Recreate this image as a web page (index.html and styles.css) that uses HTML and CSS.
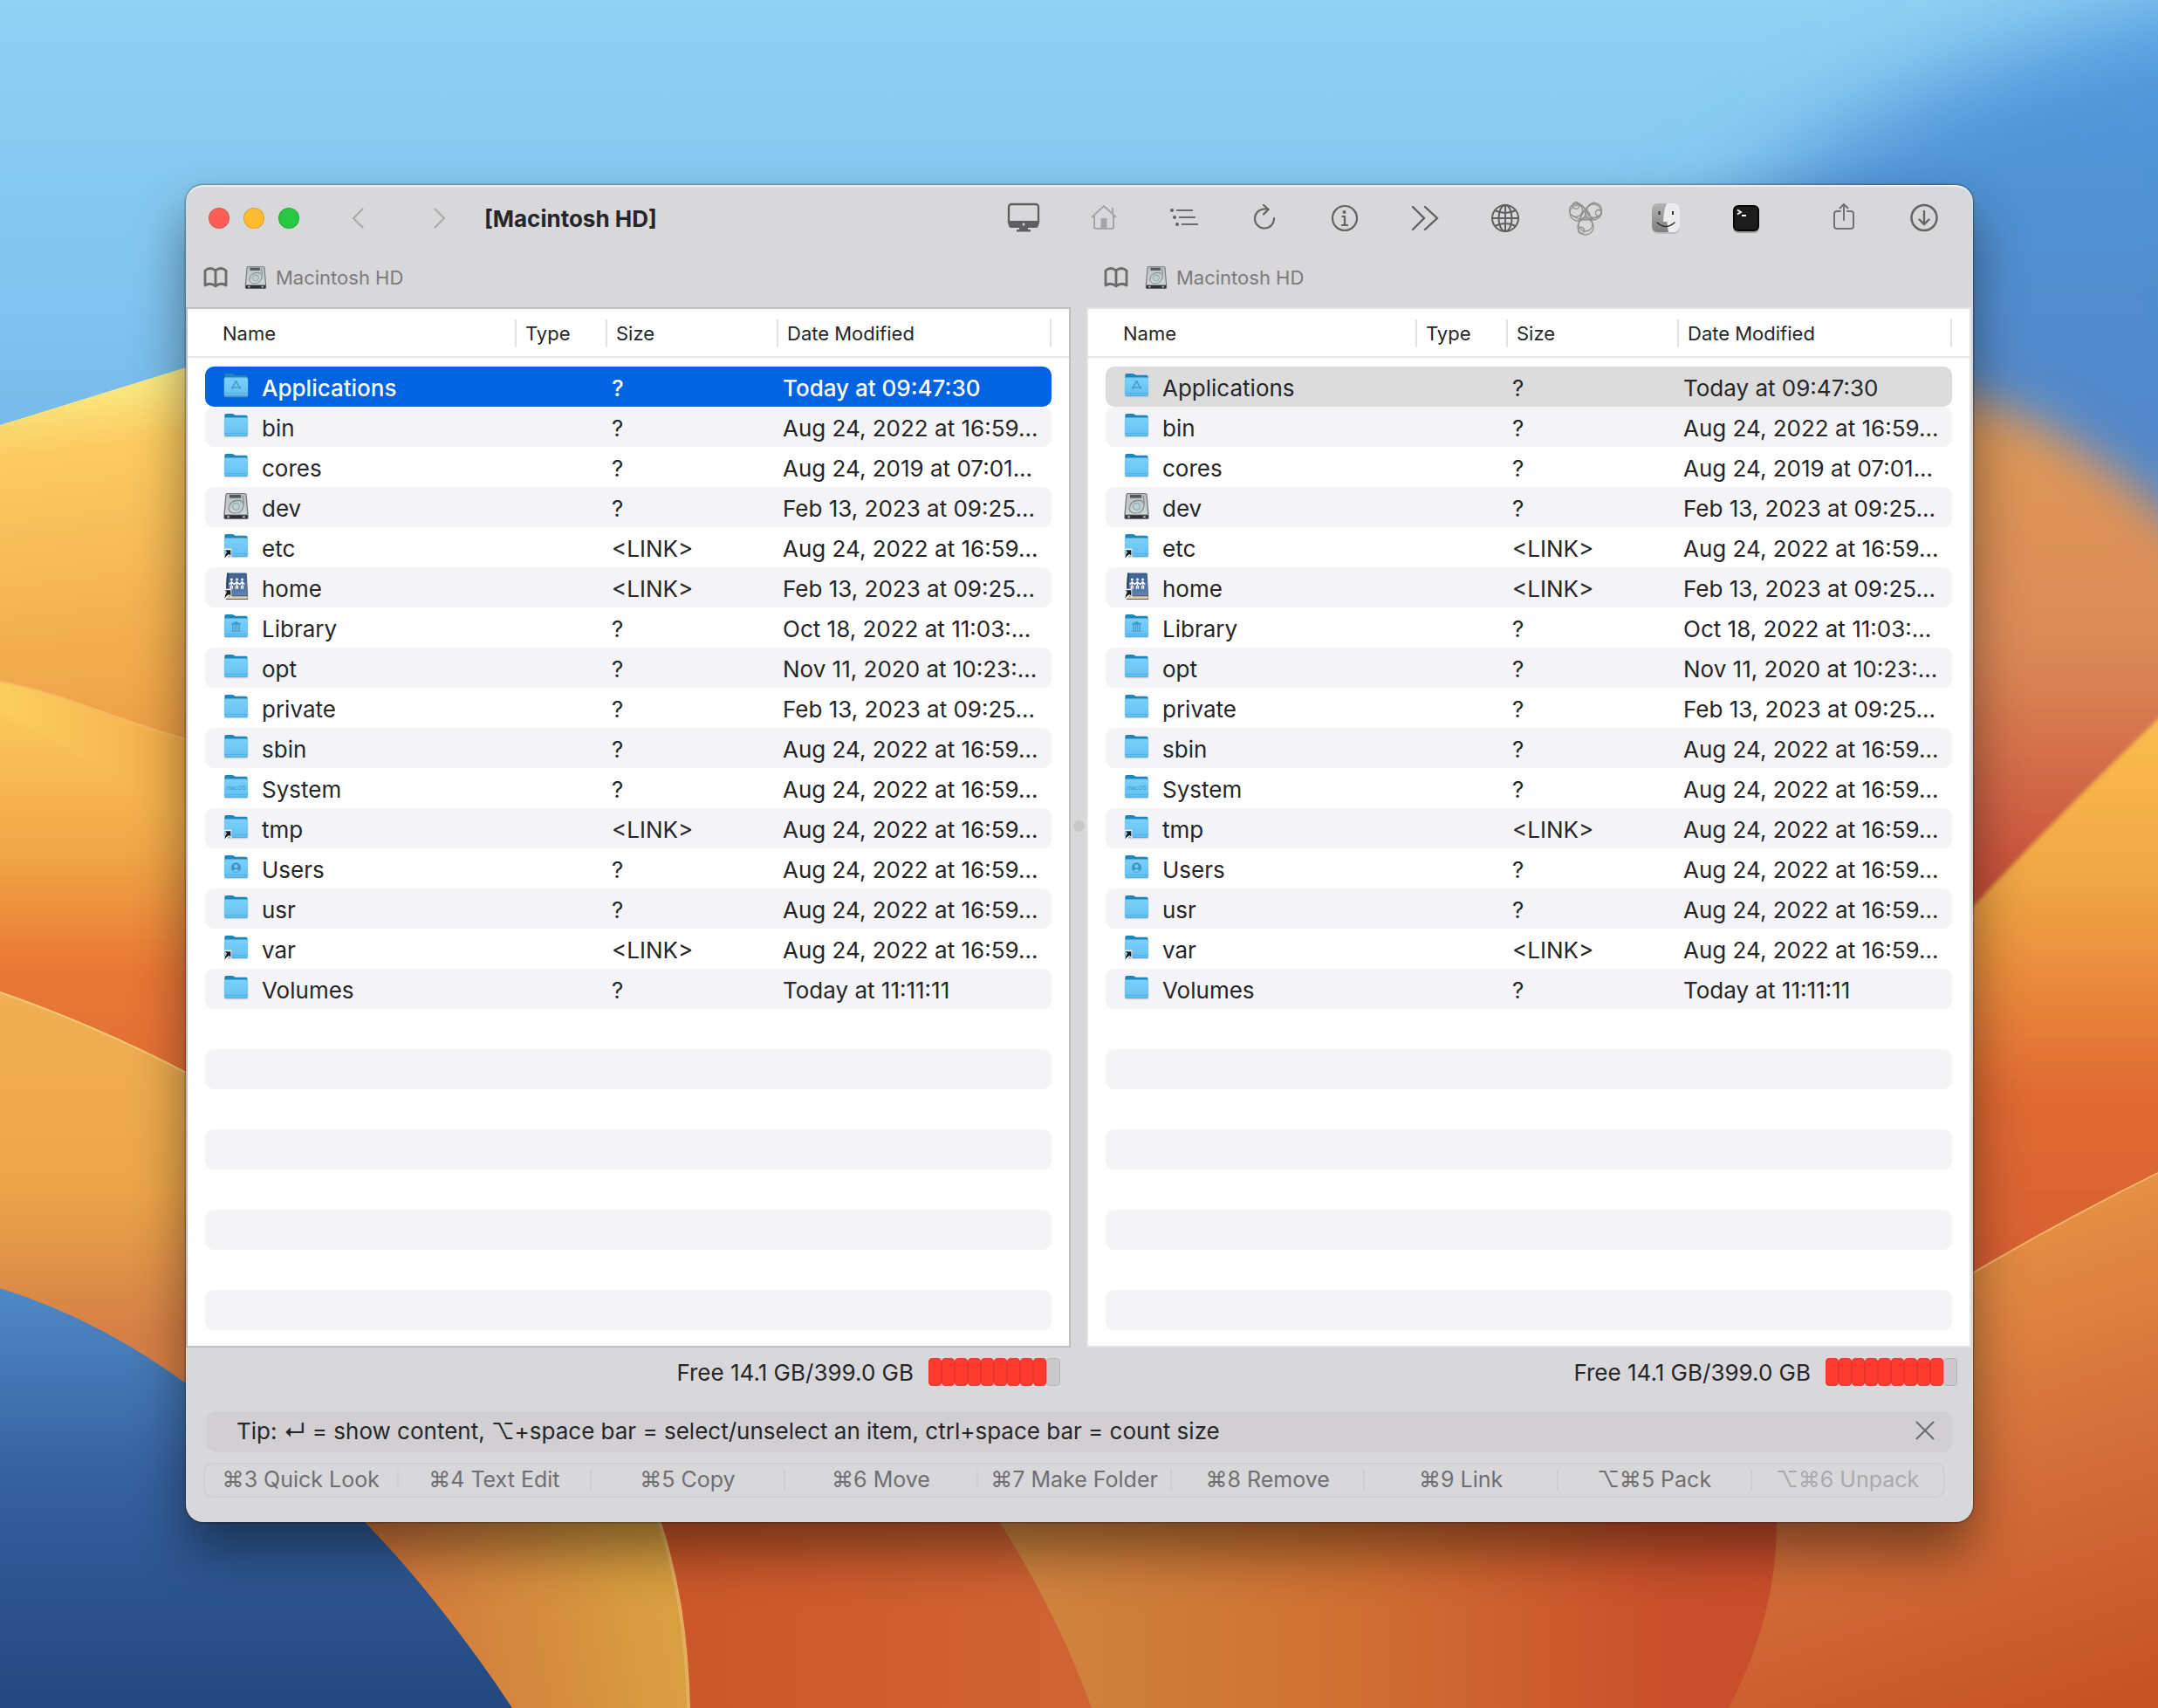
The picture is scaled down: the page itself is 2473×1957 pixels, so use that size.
FILE: index.html
```html
<!DOCTYPE html>
<html lang="en">

<head>
    <meta charset="UTF-8">
    <meta name="viewport" content="width=device-width, initial-scale=1.0">
    <title>Macintosh HD</title>
    <link rel="stylesheet" href="styles.css">
</head>

<body>

    <!-- wallpaper -->
    <svg class="wallpaper" viewBox="0 0 2473 1957" preserveAspectRatio="none" aria-hidden="true">
        <defs>
            <linearGradient id="sky" x1="0" y1="0" x2="0" y2="1">
                <stop offset="0" stop-color="#8fd0f3" />
                <stop offset=".5" stop-color="#82c6f0" />
                <stop offset="1" stop-color="#70b4e8" />
            </linearGradient>
            <linearGradient id="skyRight" x1="0" y1="0" x2="0" y2="1">
                <stop offset="0" stop-color="#4f9ce0" />
                <stop offset=".5" stop-color="#5289c9" />
                <stop offset="1" stop-color="#5289c9" />
            </linearGradient>
            <linearGradient id="petal1" gradientUnits="userSpaceOnUse" x1="80" y1="430" x2="130" y2="850">
                <stop offset="0" stop-color="#fbf08a" />
                <stop offset=".2" stop-color="#fccb60" />
                <stop offset="1" stop-color="#ec9f45" />
            </linearGradient>
            <linearGradient id="petal2" x1="0" y1="0" x2="0" y2="1">
                <stop offset="0" stop-color="#fbcb5c" />
                <stop offset=".3" stop-color="#f0a445" />
                <stop offset=".52" stop-color="#e87735" />
                <stop offset="1" stop-color="#dd6634" />
            </linearGradient>
            <linearGradient id="petal3" x1="0" y1="0" x2="0" y2="1">
                <stop offset="0" stop-color="#efb052" />
                <stop offset=".4" stop-color="#eba549" />
                <stop offset=".7" stop-color="#d67f46" />
                <stop offset="1" stop-color="#d17c48" />
            </linearGradient>
            <linearGradient id="fold" x1="0" y1="0" x2="1" y2="0">
                <stop offset="0" stop-color="#fccf5e" />
                <stop offset="1" stop-color="#ee9f42" />
            </linearGradient>
            <linearGradient id="deepBlue" x1="0" y1="0" x2="0" y2="1">
                <stop offset="0" stop-color="#4f89c4" />
                <stop offset=".45" stop-color="#35619f" />
                <stop offset="1" stop-color="#234880" />
            </linearGradient>
            <linearGradient id="rightBlur" x1="0" y1="0" x2="0" y2="1">
                <stop offset="0" stop-color="#dc9b58" />
                <stop offset=".4" stop-color="#dd8a58" />
                <stop offset=".75" stop-color="#c8503a" />
                <stop offset="1" stop-color="#c8503a" />
            </linearGradient>
            <linearGradient id="rightPetal" x1="0" y1="0" x2="0" y2="1">
                <stop offset="0" stop-color="#fbc050" />
                <stop offset=".3" stop-color="#f0a544" />
                <stop offset=".65" stop-color="#e06a33" />
                <stop offset="1" stop-color="#d65e30" />
            </linearGradient>
            <linearGradient id="rightLow" gradientUnits="userSpaceOnUse" x1="2230" y1="1380" x2="2420" y2="1957">
                <stop offset="0" stop-color="#e89546" />
                <stop offset=".5" stop-color="#d4703a" />
                <stop offset="1" stop-color="#c35226" />
            </linearGradient>
            <linearGradient id="low1" gradientUnits="userSpaceOnUse" x1="460" y1="1870" x2="780" y2="1810">
                <stop offset="0" stop-color="#d2773c" />
                <stop offset=".8" stop-color="#d79b40" />
                <stop offset="1" stop-color="#d9a040" />
            </linearGradient>
            <linearGradient id="low2" x1="0" y1="0" x2="1" y2="0">
                <stop offset="0" stop-color="#cb5629" />
                <stop offset="1" stop-color="#cf6434" />
            </linearGradient>
            <linearGradient id="low3" x1="0" y1="0" x2="1" y2="0">
                <stop offset="0" stop-color="#d08840" />
                <stop offset=".45" stop-color="#cf6f32" />
                <stop offset=".8" stop-color="#c9502b" />
                <stop offset="1" stop-color="#c94d2c" />
            </linearGradient>
            <filter id="soft" x="-20%" y="-20%" width="140%" height="140%">
                <feGaussianBlur stdDeviation="26" />
            </filter>
            <filter id="softer" x="-30%" y="-50%" width="160%" height="200%">
                <feGaussianBlur stdDeviation="55" />
            </filter>
            <filter id="edge" x="-5%" y="-5%" width="110%" height="110%">
                <feGaussianBlur stdDeviation="2" />
            </filter>
        </defs>
        <rect width="2473" height="600" fill="url(#sky)" />
        <path d="M1850 420C2000 200 2150 80 2600 -20V900H1800Z" fill="url(#skyRight)" filter="url(#softer)" />
        <path d="M2060 440C2250 420 2390 480 2560 670V1200H2060Z" fill="url(#rightBlur)" filter="url(#soft)" />
        <path d="M0 487L213 421L500 330V1000H0Z" fill="url(#petal1)" />
        <path d="M0 781C90 797 150 838 300 868V1300H0Z" fill="url(#fold)" />
        <path d="M0 781C90 797 150 838 300 868" fill="none" stroke="#f8b865" stroke-width="2" />
        <path d="M-20 806L0 815L213 933L300 980V1400H-20Z" fill="url(#petal2)" filter="url(#edge)" />
        <path d="M0 1137Q110 1175 213 1229L300 1275V1700H0Z" fill="url(#petal3)" />
        <path d="M0 1137Q110 1175 213 1229" fill="none" stroke="#f6c873" stroke-width="2" />
        <path d="M2200 1105Q2340 950 2493 805V1500H2200Z" fill="url(#rightPetal)" filter="url(#edge)" />
        <path d="M380 1700H780C790 1800 792 1870 790 1957H560Z" fill="url(#low1)" />
        <path d="M740 1700C778 1790 788 1870 790 1957H1260L1160 1700Z" fill="url(#low2)" />
        <path d="M744 1710C778 1800 787 1880 789 1957" fill="none" stroke="#e5ae5f" stroke-width="4" />
        <path d="M1118 1700C1170 1780 1216 1860 1251 1957H2100V1700Z" fill="url(#low3)" />
        <path d="M2034 1700L2200 1495Q2330 1415 2473 1344V1957H1981C2026 1870 2042 1790 2034 1700Z" fill="url(#rightLow)" />
        <path d="M2200 1495Q2330 1415 2473 1344" fill="none" stroke="#f3b16a" stroke-width="2" />
        <path d="M0 1476Q110 1510 213 1585C330 1640 470 1780 587 1957H0Z" fill="url(#deepBlue)" />
    </svg>

    <!-- icon sprite -->
    <svg class="sprite" aria-hidden="true">
        <defs>
            <linearGradient id="folderFront" x1="0" y1="0" x2="0" y2="1">
                <stop offset="0" stop-color="#7bd0f9" />
                <stop offset="1" stop-color="#63c0f3" />
            </linearGradient>
            <linearGradient id="diskBody" x1="0" y1="0" x2="0" y2="1">
                <stop offset="0" stop-color="#b9bfc0" />
                <stop offset="1" stop-color="#cfd6d7" />
            </linearGradient>
            <linearGradient id="bookCover" x1="0" y1="0" x2="0" y2="1">
                <stop offset="0" stop-color="#3d5f8d" />
                <stop offset="1" stop-color="#5c83b3" />
            </linearGradient>
            <linearGradient id="finderLeft" x1="0" y1="0" x2="0" y2="1">
                <stop offset="0" stop-color="#b5b5b6" />
                <stop offset="1" stop-color="#7e7e80" />
            </linearGradient>
        </defs>
        <symbol id="folder" viewBox="0 0 32 34">
            <path d="M2 4q0-2 2-2h7q1.500 0 2.500 1l1.500 1h13q2 0 2 2v8H2z" fill="#1d86bf" />
            <rect x="1.500" y="8" width="29" height="23" rx="2" fill="#a9b6bd" opacity=".5" />
            <rect x="1.500" y="7" width="29" height="22.500" rx="2" fill="url(#folderFront)" />
            <path d="M2 26h28" stroke="#52aede" stroke-width="1" />
            <path d="M3 29h26" stroke="#4aa3d2" stroke-width="1" />
        </symbol>
        <symbol id="apps" viewBox="0 0 32 34">
            <use href="#folder" />
            <path d="M16 11l-5 10M16 11l5 10M10 19h12" fill="none" stroke="#3f98c9" stroke-width="1.500" />
        </symbol>
        <symbol id="library" viewBox="0 0 32 34">
            <use href="#folder" />
            <path d="M10.500 14L16 11l5.500 3zM10 22.500h12" fill="#3f98c9" stroke="#3f98c9" />
            <path d="M12 15v7M14.700 15v7M17.300 15v7M20 15v7" stroke="#3f98c9" stroke-width="1.300" />
        </symbol>
        <symbol id="system" viewBox="0 0 32 34">
            <use href="#folder" />
            <text x="16" y="20" class="folder-label">macOS</text>
        </symbol>
        <symbol id="users" viewBox="0 0 32 34">
            <use href="#folder" />
            <circle cx="16" cy="17" r="6" fill="#3c96c8" />
            <circle cx="16" cy="15.500" r="2.300" fill="#74cbf6" />
            <path d="M12 21q4-4 8 0q-4 3-8 0z" fill="#74cbf6" />
        </symbol>
        <symbol id="disk" viewBox="0 0 32 34">
            <path d="M5 1h22q1.500 0 2 2l2 24v4q0 2-2 2H3q-2 0-2-2v-4L3 3q.5-2 2-2z" fill="#77797a" />
            <path d="M5.500 2h21q1 0 1.200 1.500L29.500 27h-27L4.300 3.500Q4.500 2 5.500 2z" fill="url(#diskBody)" />
            <rect x="8" y="3" width="14" height="4" fill="#55595b" />
            <path d="M24 4q4 18-6 21q-10 2-11-5q1-10 12-10q4 0 5 3" fill="none" stroke="#7d888a" stroke-width="1.200" />
            <circle cx="16" cy="17.500" r="4.200" fill="#bcd3da" stroke="#8b9a9e" />
            <path d="M2 28h28v3q0 1-1 1H3q-1 0-1-1z" fill="#303234" />
            <path d="M5 30h3M24 30h3" stroke="#b8bcbd" stroke-width="2" />
        </symbol>
        <symbol id="alias" viewBox="0 0 32 34">
            <path d="M1 20h9.500v10.500L7.500 28l-5 5.500L.5 31l3.500-7z" fill="#fff" />
            <path d="M2.500 21.500H9.500v7L7.300 26.500Q4 28 2 31.500Q2.500 27 4.800 24z" fill="#1c1c1c" />
        </symbol>
        <symbol id="folder-link" viewBox="0 0 32 34">
            <use href="#folder" />
            <use href="#alias" />
        </symbol>
        <symbol id="home-link" viewBox="0 0 32 34">
            <path d="M5 1h24l1.500 28v4H3z" fill="#62564a" />
            <path d="M4 29h26v3H4z" fill="#d9cdb2" />
            <path d="M5 .5h23.500L30 28H3.500z" fill="url(#bookCover)" />
            <path d="M5 .5L3.500 28h2.500L7 .5z" fill="#2b4567" />
            <g fill="#fff">
                <circle cx="10.500" cy="8.500" r="1.600" />
                <circle cx="17" cy="8.500" r="1.600" />
                <circle cx="23.500" cy="8.500" r="1.600" />
            </g>
            <path d="M7.500 14.500l3-3l3.200 3l3.300-3l3.200 3l3.300-3l3 3M10.500 11v5M9.500 16v4M11.500 16v4M17 11v5M16 16v4M18 16v4M23.500 11v5M22.500 16v4M24.500 16v4" fill="none" stroke="#fff" stroke-width="1.500" />
            <use href="#alias" />
        </symbol>
        <symbol id="book" viewBox="0 0 28 24">
            <path d="M14 4Q8-1 2 4v17q6-4 12 1q6-5 12-1V4q-6-5-12 0zV22" fill="none" stroke="#6b6b6d" stroke-width="2.800" stroke-linejoin="round" />
        </symbol>
    </svg>

    <main class="window">
        <header class="titlebar">
            <div class="lights">
                <button class="light light-close" aria-label="Close"></button>
                <button class="light light-minimize" aria-label="Minimize"></button>
                <button class="light light-zoom" aria-label="Zoom"></button>
            </div>
            <div class="history">
                <button class="history-btn" aria-label="Back">
                    <svg width="14" height="24" viewBox="0 0 14 24"><path d="M12.500 1.500L2 12l10.500 10.500" /></svg>
                </button>
                <button class="history-btn" aria-label="Forward">
                    <svg width="14" height="24" viewBox="0 0 14 24"><path d="M1.500 1.500L12 12L1.500 22.500" /></svg>
                </button>
            </div>
            <h1 class="title">[Macintosh HD]</h1>
            <nav class="toolbar">
                <button class="tool" aria-label="Computer">
                    <svg width="38" height="36" viewBox="0 0 38 36">
                        <rect x="2" y="2" width="34" height="24" rx="3" fill="none" stroke="#5f5f61" stroke-width="2.300" />
                        <path d="M2 21h34v5q0 3-3 3H5q-3 0-3-3zM14 28h10v3h3v2.500H11V31h3z" fill="#5f5f61" />
                        <circle cx="19" cy="25" r="1.500" fill="#d7d7d9" />
                    </svg>
                </button>
                <button class="tool" aria-label="Home">
                    <svg width="32" height="32" viewBox="0 0 32 32">
                        <path d="M2 15L16 2l14 13M5 13v13q0 2 2 2h18q2 0 2-2V13M26 11V4" fill="none" stroke="#a5a5a7" stroke-width="2" />
                        <rect x="12.500" y="16" width="7" height="12" fill="#a5a5a7" />
                    </svg>
                </button>
                <button class="tool" aria-label="List">
                    <svg width="34" height="24" viewBox="0 0 34 24">
                        <path d="M8 3h19M11 11h19M14 19h19" stroke="#6d6d6f" stroke-width="2" />
                        <g fill="#5f5f61">
                            <circle cx="3" cy="3" r="2" />
                            <circle cx="6" cy="11" r="2" />
                            <circle cx="9" cy="19" r="2" />
                        </g>
                    </svg>
                </button>
                <button class="tool" aria-label="Refresh">
                    <svg width="28" height="32" viewBox="0 0 28 32">
                        <path d="M25 16A11 11 0 1 1 14 5.500h4M13 .8l5.500 5.200l-5.500 5.500" fill="none" stroke="#646466" stroke-width="2.200" stroke-linecap="round" />
                    </svg>
                </button>
                <button class="tool" aria-label="Get info">
                    <svg width="32" height="32" viewBox="0 0 32 32">
                        <circle cx="16" cy="16" r="14" fill="none" stroke="#646466" stroke-width="2.200" />
                        <circle cx="15.500" cy="9" r="2" fill="#646466" />
                        <path d="M12.500 14H16v10M12 24h8" fill="none" stroke="#646466" stroke-width="2.200" />
                    </svg>
                </button>
                <button class="tool" aria-label="More">
                    <svg width="32" height="28" viewBox="0 0 32 28">
                        <path d="M2 1l13 13L2 27M16 1l14 13L16 27" fill="none" stroke="#5f5f61" stroke-width="2.300" stroke-linecap="round" />
                    </svg>
                </button>
                <button class="tool" aria-label="Network">
                    <svg width="34" height="34" viewBox="0 0 34 34">
                        <g fill="none" stroke="#5f5f61" stroke-width="2">
                            <circle cx="17" cy="17" r="15" />
                            <ellipse cx="17" cy="17" rx="7.500" ry="15" />
                            <path d="M17 2v30M2 17h30M5 8q12 6 24 0M5 26q12-6 24 0" />
                        </g>
                    </svg>
                </button>
                <button class="tool" aria-label="Compare">
                    <svg width="40" height="40" viewBox="0 0 40 40">
                        <g fill="none" stroke="#919193" stroke-width="1.300">
                            <circle cx="9" cy="11" r="7.500" />
                            <circle cx="11" cy="14" r="9" />
                            <circle cx="30" cy="11" r="8.500" />
                            <circle cx="29" cy="13" r="9" />
                            <circle cx="35" cy="14" r="3.500" />
                            <circle cx="9" cy="5.500" r="3.800" />
                            <circle cx="20" cy="30" r="9" />
                            <circle cx="20" cy="27" r="8" />
                            <circle cx="15" cy="34" r="3.500" />
                            <path d="M13 23Q15 12 20 10q5 2 7 13M5 17q14 10 30 0M9 2q10 2 18 20M31 2q-10 2-18 20" />
                        </g>
                    </svg>
                </button>
                <button class="tool" aria-label="Finder">
                    <svg width="36" height="38" viewBox="0 0 36 38">
                        <rect x="2" y="3" width="32" height="34" rx="7" fill="#a9a9ab" opacity=".6" />
                        <rect x="2" y="2" width="32" height="33" rx="7" fill="#ececee" />
                        <path d="M19 2H9q-7 0-7 7v19q0 7 7 7h12q-1.500-6-1.500-12H15Q15.500 10 19 2z" fill="url(#finderLeft)" />
                        <path d="M10.500 11v4M26 11v4" stroke="#2f2f31" stroke-width="2" />
                        <path d="M8 24q10 9 20 0" fill="none" stroke="#2f2f31" stroke-width="1.500" stroke-linecap="round" />
                    </svg>
                </button>
                <button class="tool" aria-label="Terminal">
                    <svg width="34" height="38" viewBox="0 0 34 38">
                        <rect x="2" y="5" width="30" height="31" rx="6" fill="#77777a" opacity=".6" />
                        <rect x="2" y="4" width="30" height="30" rx="6" fill="#060607" />
                        <rect x="4" y="6" width="26" height="26" rx="4" fill="#1b1c1d" />
                        <path d="M7 9.500l4 2.500l-4 2.500M12 16h5" fill="none" stroke="#fff" stroke-width="1.800" />
                    </svg>
                </button>
                <button class="tool tool-share" aria-label="Share">
                    <svg width="26" height="36" viewBox="0 0 26 36">
                        <path d="M9 10H5q-3 0-3 3v14q0 3 3 3h16q3 0 3-3V13q0-3-3-3h-4M13 20V2M8.500 6.500L13 2l4.500 4.500" fill="none" stroke="#727274" stroke-width="2" stroke-linecap="round" />
                    </svg>
                </button>
                <button class="tool" aria-label="Downloads">
                    <svg width="34" height="34" viewBox="0 0 34 34">
                        <path d="M17 9v15M11.500 18.500L17 24l5.500-5.500" fill="none" stroke="#646466" stroke-width="2.300" stroke-linecap="round" />
                        <circle cx="17" cy="16.500" r="14.500" fill="none" stroke="#646466" stroke-width="2.500" />
                    </svg>
                </button>
            </nav>
        </header>

        <div class="panes">
            <section class="pane active">
                <div class="path">
                    <svg class="path-book" width="28" height="24"><use href="#book" /></svg>
                    <svg class="path-disk" width="26" height="28"><use href="#disk" /></svg>
                    <a class="path-link" href="#">Macintosh HD</a>
                </div>
                <div class="list"></div>
                <div class="status">
                    <span>Free 14.1 GB/399.0 GB</span>
                    <div class="gauge"><i></i><i></i><i></i><i></i><i></i><i></i><i></i><i></i><i></i><i class="free"></i></div>
                </div>
            </section>
            <div class="splitter"><span class="splitter-dot"></span></div>
            <section class="pane">
                <div class="path">
                    <svg class="path-book" width="28" height="24"><use href="#book" /></svg>
                    <svg class="path-disk" width="26" height="28"><use href="#disk" /></svg>
                    <a class="path-link" href="#">Macintosh HD</a>
                </div>
                <div class="list"></div>
                <div class="status">
                    <span>Free 14.1 GB/399.0 GB</span>
                    <div class="gauge"><i></i><i></i><i></i><i></i><i></i><i></i><i></i><i></i><i></i><i class="free"></i></div>
                </div>
            </section>
        </div>

        <div class="tip">
            <span>Tip: ↵ = show content, ⌥+space bar = select/unselect an item, ctrl+space bar = count size</span>
            <button class="tip-close" aria-label="Close tip">
                <svg width="22" height="22" viewBox="0 0 22 22"><path d="M1.500 1.500l19 19M20.500 1.500l-19 19" /></svg>
            </button>
        </div>

        <footer class="actions">
            <button>⌘3 Quick Look</button>
            <button>⌘4 Text Edit</button>
            <button>⌘5 Copy</button>
            <button>⌘6 Move</button>
            <button>⌘7 Make Folder</button>
            <button>⌘8 Remove</button>
            <button>⌘9 Link</button>
            <button>⌥⌘5 Pack</button>
            <button disabled>⌥⌘6 Unpack</button>
        </footer>
    </main>

    <script src="script.js"></script>

</body>

</html>
```

FILE: styles.css
```css
* {
    box-sizing: border-box;
}

body {
    margin: 0;
    padding: 212px 212px 212px 213px;
    min-height: 100vh;
    font-family: Inter, "DejaVu Sans", sans-serif;
    font-size: 26px;
    color: #262628;
    background-color: #82c6f0;
    position: relative;
}

button {
    font: inherit;
    color: inherit;
    background: none;
    border: none;
    padding: 0;
}

.wallpaper {
    position: absolute;
    top: 0;
    left: 0;
    width: 100%;
    height: 100%;
    z-index: -1;
}

.sprite {
    position: absolute;
    width: 0;
    height: 0;
    visibility: hidden;
}

.folder-label {
    font-size: 7px;
    text-anchor: middle;
    fill: #3c96c8;
}

.window {
    background-color: #d8d7d9;
    border-radius: 20px;
    padding-bottom: 28px;
    box-shadow: inset 0 2px 1px rgba(255, 255, 255, 0.6), 0 0 2px 1px rgba(0, 0, 0, 0.35), 0 32px 60px rgba(0, 0, 0, 0.45);
}

/* title bar */
.titlebar {
    display: flex;
    align-items: center;
    height: 76px;
    padding: 0 10px 0 26px;
}

.lights {
    display: flex;
    gap: 16px;
}

.light {
    width: 24px;
    height: 24px;
    border-radius: 50%;
    border: 1px solid rgba(0, 0, 0, 0.15);
}

.light-close {
    background-color: #ff5f57;
}

.light-minimize {
    background-color: #febc2e;
}

.light-zoom {
    background-color: #28c840;
}

.history {
    display: flex;
    gap: 54px;
    margin-left: 47px;
}

.history-btn {
    display: flex;
    justify-content: center;
    width: 40px;
}

.history-btn path {
    fill: none;
    stroke: #a9a9ab;
    stroke-width: 2px;
    stroke-linecap: round;
}

.title {
    margin: 0 0 0 31px;
    font-size: 26px;
    font-weight: 700;
    white-space: nowrap;
}

.toolbar {
    display: flex;
    margin-left: auto;
}

.tool {
    display: flex;
    align-items: center;
    justify-content: center;
    width: 92px;
    height: 40px;
}

.tool-share {
    margin-left: 20px;
}

/* panes */
.panes {
    display: grid;
    grid-template-columns: 1fr 18px 1fr;
    padding-right: 2px;
}

.path {
    display: flex;
    align-items: center;
    height: 64px;
    padding: 0 20px 4px;
}

.path-disk {
    margin: 0 10px 0 19px;
}

.path-link {
    font-size: 22px;
    color: #7b7b7d;
    text-decoration: none;
}

.list {
    border: 2px solid #e5e5e7;
    padding: 0 20px 18px;
    background: linear-gradient(#e6e6e8, #e6e6e8) 0 54px / 100% 2px no-repeat #fff;
}

.active .list {
    border-color: #bebec0;
}

.files {
    width: 100%;
    table-layout: fixed;
    border-spacing: 0;
}

.files th {
    height: 66px;
    padding: 0 0 10px;
    font-size: 22px;
    font-weight: 400;
    text-align: left;
}

.files th span {
    display: block;
    height: 32px;
    line-height: 32px;
    padding-left: 10px;
    border-left: 2px solid #e3e3e5;
}

.files th:first-child span {
    padding-left: 20px;
    border-left: none;
}

.files th:last-child span {
    border-right: 2px solid #e3e3e5;
}

.col-name {
    width: 355px;
}

.col-type {
    width: 104px;
}

.col-size {
    width: 196px;
}

.files td {
    height: 46px;
    padding: 3px 0 0 7px;
    line-height: 32px;
    white-space: nowrap;
    overflow: hidden;
}

.files td:first-child {
    padding-left: 20px;
    border-radius: 10px 0 0 10px;
}

.files td:last-child {
    border-radius: 0 10px 10px 0;
}

.files tbody tr:nth-child(even) td {
    background-color: #f4f3f6;
}

.files tbody tr.selected td {
    background-color: #dcdcdd;
}

.active .files tbody tr.selected td {
    background-color: #0063e1;
    color: #fff;
    font-weight: 500;
}

.file {
    display: flex;
    align-items: center;
    gap: 14px;
}

.file svg {
    flex: none;
    margin-top: -6px;
}

.splitter {
    display: flex;
    align-items: center;
    justify-content: center;
    padding: 64px 0 77px;
}

.splitter-dot {
    width: 13px;
    height: 13px;
    border-radius: 50%;
    background-color: #c8c8ca;
}

.status {
    display: flex;
    align-items: center;
    justify-content: flex-end;
    gap: 17px;
    padding: 12px 16px 29px;
}

.active .status {
    padding-right: 12px;
}

.gauge {
    display: flex;
}

.gauge i {
    width: 15px;
    height: 32px;
    border: 1px solid #e8342b;
    border-radius: 4px;
    background-color: #ff3b30;
}

.gauge .free {
    width: 16px;
    border-color: #b5b5b7;
    background-color: #c9c9cb;
}

/* bottom bars */
.tip {
    display: flex;
    align-items: center;
    justify-content: space-between;
    height: 47px;
    margin: 0 24px 12px;
    padding: 0 20px 3px 34px;
    border-radius: 10px;
    background-color: #d1cfd2;
}

.tip-close {
    display: flex;
}

.tip-close path {
    stroke: #6b6b6d;
    stroke-width: 2px;
    stroke-linecap: round;
}

.actions {
    display: flex;
    height: 40px;
    margin: 0 32px 0 20px;
    padding: 5px 0 7px;
    border: 2px solid #d0cfd1;
    border-radius: 10px;
    font-size: 25px;
}

.actions button {
    flex: 1 1 0;
    display: flex;
    align-items: center;
    justify-content: center;
    color: #6f6e71;
    white-space: nowrap;
}

.actions button + button {
    border-left: 2px solid #cecdd0;
}

.actions button:disabled {
    color: #aaa9ac;
}
```

FILE: script.js
```js
const files = [
    ['apps', 'Applications', '?', 'Today at 09:47:30'],
    ['folder', 'bin', '?', 'Aug 24, 2022 at 16:59...'],
    ['folder', 'cores', '?', 'Aug 24, 2019 at 07:01...'],
    ['disk', 'dev', '?', 'Feb 13, 2023 at 09:25...'],
    ['folder-link', 'etc', '&lt;LINK&gt;', 'Aug 24, 2022 at 16:59...'],
    ['home-link', 'home', '&lt;LINK&gt;', 'Feb 13, 2023 at 09:25...'],
    ['library', 'Library', '?', 'Oct 18, 2022 at 11:03:...'],
    ['folder', 'opt', '?', 'Nov 11, 2020 at 10:23:...'],
    ['folder', 'private', '?', 'Feb 13, 2023 at 09:25...'],
    ['folder', 'sbin', '?', 'Aug 24, 2022 at 16:59...'],
    ['system', 'System', '?', 'Aug 24, 2022 at 16:59...'],
    ['folder-link', 'tmp', '&lt;LINK&gt;', 'Aug 24, 2022 at 16:59...'],
    ['users', 'Users', '?', 'Aug 24, 2022 at 16:59...'],
    ['folder', 'usr', '?', 'Aug 24, 2022 at 16:59...'],
    ['folder-link', 'var', '&lt;LINK&gt;', 'Aug 24, 2022 at 16:59...'],
    ['folder', 'Volumes', '?', 'Today at 11:11:11']
];
const visibleRows = 24;

function fileRow(file, index) {
    const [icon, name, size, date] = file;
    return `<tr class="${index === 0 ? 'selected' : ''}">
        <td><div class="file"><svg width="31" height="32"><use href="#${icon}" /></svg>${name}</div></td>
        <td></td>
        <td>${size}</td>
        <td>${date}</td>
    </tr>`;
}

const emptyRow = '<tr><td></td><td></td><td></td><td></td></tr>';

document.querySelectorAll('.list').forEach(function (list) {
    list.innerHTML = `<table class="files">
        <colgroup><col class="col-name"><col class="col-type"><col class="col-size"><col></colgroup>
        <thead>
            <tr>
                <th><span>Name</span></th>
                <th><span>Type</span></th>
                <th><span>Size</span></th>
                <th><span>Date Modified</span></th>
            </tr>
        </thead>
        <tbody>${files.map(fileRow).join('')}${emptyRow.repeat(visibleRows - files.length)}</tbody>
    </table>`;
});
```
